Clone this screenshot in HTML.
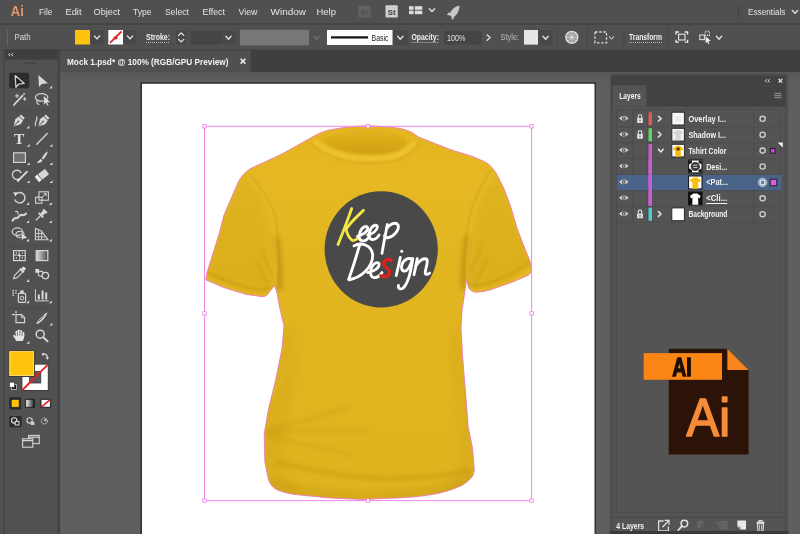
<!DOCTYPE html>
<html><head><meta charset="utf-8"><title>Illustrator</title>
<style>
html,body{margin:0;padding:0;width:800px;height:534px;overflow:hidden;background:#5f5f5f}
svg{display:block}
text{font-family:"Liberation Sans",sans-serif;}
text.srf{font-family:"Liberation Serif",serif;}
</style></head><body>
<svg width="800" height="534" viewBox="0 0 800 534" font-family="Liberation Sans, sans-serif">
<g opacity="0.999">
<rect x="0" y="0" width="800" height="534" fill="#5f5f5f" />
<rect x="60" y="72" width="740" height="7" fill="#5a5a5a" />
<rect x="141.2" y="83" width="454.1" height="460" fill="#ffffff" stroke="#333333" stroke-width="1.6"/>
<defs>
<linearGradient id="shg" x1="0" y1="0" x2="0" y2="1">
 <stop offset="0" stop-color="#e3b620"/><stop offset="0.15" stop-color="#e6b924"/><stop offset="0.32" stop-color="#e2b621"/><stop offset="0.55" stop-color="#e1b51f"/><stop offset="1" stop-color="#dfb31e"/>
</linearGradient>
<filter id="bl2" filterUnits="userSpaceOnUse" x="0" y="0" width="800" height="534"><feGaussianBlur stdDeviation="2"/></filter>
<filter id="bl1" filterUnits="userSpaceOnUse" x="0" y="0" width="800" height="534"><feGaussianBlur stdDeviation="1"/></filter>
<filter id="bl4" filterUnits="userSpaceOnUse" x="0" y="0" width="800" height="534"><feGaussianBlur stdDeviation="4"/></filter>
<clipPath id="shclip"><path id="shp" d="M317.5 134.2 C324 131 329 130 335 129 C346 127 356 126 366.5 125.9 C378 126 388 126.8 398 128.1 C403 129 408 130.5 412 132.5 L418.5 137 L450 149.4 C462 153.5 470 155 477 158.4 C482 160.5 485 161.5 488.3 164 C492 167 495 171 497.3 175.3 L504 188.8 L510.8 206.8 L517 228 L523.8 246 L529.4 259.5 C530.5 263 531.3 266 531.6 269.6 C531 272.5 530 274 528.3 275.3 L512.5 282 L490 289.9 C484 291.5 479 292.3 474.3 292.1 C471 291 469.5 289.5 468.6 287.6 L466.4 279.8 L465.3 288.8 L461.9 311.3 L461 328 L462.5 355.6 L465.4 391 L468.2 426.7 L472.5 448 L474.3 469.4 C474 474 473 476 470.7 478.3 C468 481.5 465 483.5 461.8 485.4 C452 490 443 492.5 433.4 494.3 C420 496.5 410 497.3 397.8 497.9 L380 498.6 L364.5 499.6 L329 497.9 L293.4 494.3 C286 493 280 491.5 275.6 489 C272 486.5 270 483.5 268.5 480 L264.9 462.3 L264.2 433.8 L268.5 409 L275.6 380.5 L282 348.5 L284 326 L280 309 L276.6 291 L274.4 285.4 L267.6 294.4 C266 296 264 296.8 262 296.6 L246.3 294.4 L223.8 287.6 L205.8 279.8 L206.9 273 L212.5 255 L219.5 232.5 L224 215 L228.5 204.5 L237.3 184.3 C239 180 241 177 244 174 C247 170.5 251 168 255.3 166.3 L280 155 L300 143.9 Z"/></clipPath>
</defs>
<use href="#shp" fill="url(#shg)"/>
<g clip-path="url(#shclip)">
<path d="M205 280 L224 215 L244 174 L262 200 L268 250 L274 286 L262 297 Z" fill="#b8900c" opacity="0.16" filter="url(#bl4)"/>
<path d="M532 270 L517 228 L497 175 L480 200 L472 250 L466 281 L474 293 Z" fill="#b8900c" opacity="0.16" filter="url(#bl4)"/>
<path d="M262 440 C270 400 280 370 284 326 L300 330 C296 380 285 420 282 470 L300 492 L270 492 Z" fill="#a88408" opacity="0.11" filter="url(#bl4)"/>
<path d="M476 440 C470 400 464 370 461 326 L450 330 C452 380 458 420 460 470 L440 494 L474 490 Z" fill="#a88408" opacity="0.10" filter="url(#bl4)"/>
<path d="M270 478 C300 486 340 490 370 491 C410 490 445 486 472 474 L474 500 L264 500 Z" fill="#a88408" opacity="0.16" filter="url(#bl2)"/>
<path d="M266 431 C295 424 325 414 351 407" stroke="#a88408" stroke-width="2.5" fill="none" opacity="0.28" filter="url(#bl2)"/>
<path d="M266 433 C300 430 335 430 368 432" stroke="#a88408" stroke-width="2.5" fill="none" opacity="0.25" filter="url(#bl2)"/>
<path d="M266 436 C295 442 325 449 351 455" stroke="#a88408" stroke-width="2.5" fill="none" opacity="0.25" filter="url(#bl2)"/>
<path d="M276 462 C310 470 350 478 385 478.5 C420 478 450 476 470 470" stroke="#9c7a06" stroke-width="3" fill="none" opacity="0.32" filter="url(#bl2)"/>
<path d="M268 400 C285 380 295 350 300 320" stroke="#f0c83c" stroke-width="3" fill="none" opacity="0.25" filter="url(#bl2)"/>
<path d="M276 236 C279 252 281.5 270 280 290" stroke="#9c7a06" stroke-width="6" fill="none" opacity="0.38" filter="url(#bl2)"/>
<path d="M467 236 C464.5 252 462 270 463.5 290" stroke="#9c7a06" stroke-width="6" fill="none" opacity="0.38" filter="url(#bl2)"/>
<path d="M262 250 L272 275 M256 262 L268 284" stroke="#a88408" stroke-width="2" fill="none" opacity="0.22" filter="url(#bl1)"/>
<path d="M481 246 L471 272 M488 258 L476 282" stroke="#a88408" stroke-width="2" fill="none" opacity="0.22" filter="url(#bl1)"/>
<path d="M246.8 175.6 C258 186 268 200 272 215 C276 235 277 262 275 286" stroke="#f0c83c" stroke-width="1.5" fill="none" opacity="0.55" filter="url(#bl1)"/>
<path d="M249 175 C260 186 270 200 274.5 215 C278.5 235 279.5 262 278 288" stroke="#b08c0c" stroke-width="1.6" fill="none" opacity="0.35" filter="url(#bl1)"/>
<path d="M494 171 C484 184 476 200 472 218 C468 240 466 262 467 281" stroke="#f0c83c" stroke-width="1.5" fill="none" opacity="0.5" filter="url(#bl1)"/>
<path d="M491.5 170 C481.5 184 473.5 200 469.5 218 C465.5 240 463.5 262 464 282" stroke="#b08c0c" stroke-width="1.6" fill="none" opacity="0.35" filter="url(#bl1)"/>
<path d="M207.5 272 L225 280.5 L247 287.5 L263 290 L270 287" stroke="#b08c0c" stroke-width="1.4" fill="none" opacity="0.55" filter="url(#bl1)"/>
<path d="M529 262 L511 275 L489 283 L474 286 L469 283" stroke="#b08c0c" stroke-width="1.4" fill="none" opacity="0.55" filter="url(#bl1)"/>
<path d="M205.8 279.8 L223.8 287.6 L246.3 294.4 L262 296.6 L268 294" stroke="#f0c43a" stroke-width="2.5" fill="none" opacity="0.5" filter="url(#bl1)"/>
<path d="M531.6 269.6 L512.5 282 L490 289.9 L474.3 292.1" stroke="#f0c43a" stroke-width="2.5" fill="none" opacity="0.5" filter="url(#bl1)"/>
<defs><linearGradient id="colg" x1="0" y1="0" x2="0" y2="1"><stop offset="0" stop-color="#dfb21c"/><stop offset="1" stop-color="#d0a012"/></linearGradient></defs>
<path d="M314 141.5 C322 149 333 154 344.6 156.6 C353 158.4 361 159.2 370 159.2 C379 159.2 388 158.4 396.2 156 C404 153.4 410 149 415.5 142.5" stroke="#f0c434" stroke-width="6.5" fill="none" opacity="0.75" filter="url(#bl1)"/>
<path d="M322.8 141.5 C326 137 330 135 335 134.2 C346 132.5 356 131.7 366.5 131.6 C378 131.7 388 132.6 398 134.2 C402 135.5 405 138 406.8 143 C403 148 399 150 394.5 151.8 C386 153.8 378 154.4 370 154.4 C361 154.2 353 153.6 345.5 151.8 C336 149 329 146 322.8 141.5 Z" fill="url(#colg)" filter="url(#bl1)"/>
<path d="M310.5 143 C320 151 332 157 343.8 160.2 C352 162 361 162.8 370 162.8 C380 162.7 389 161.8 398 159.4 C406 156.4 413 151.4 419 144" stroke="#c29006" stroke-width="1.2" fill="none" opacity="0.5" filter="url(#bl1)"/>
</g>
<use href="#shp" fill="none" stroke="#ee7ab4" stroke-width="1" opacity="0.9"/>
<ellipse cx="381.2" cy="249.3" rx="56.6" ry="58.1" fill="#494949"/>
<g transform="translate(330,200) scale(0.178)" fill="none" stroke-linecap="round" stroke-linejoin="round" stroke-width="16">
<g stroke="#f3e645">
<path d="M122 48 C100 110 70 190 45 250"/>
<path d="M188 58 C150 95 110 130 90 165 C100 200 115 225 130 228 C140 228 148 222 155 215"/>
</g><g stroke="#ffffff">
<path d="M155 203 C180 198 210 182 212 160 C212 144 192 146 180 160 C160 183 158 222 178 229 C195 233 212 220 222 203"/>
<path d="M212 196 C236 190 264 174 266 152 C266 137 247 139 235 153 C216 176 213 214 232 221 C249 225 266 213 276 196"/>
<path d="M322 138 C312 190 300 250 292 300"/>
<path d="M318 160 C335 135 370 120 382 140 C392 165 360 205 325 212 C315 213 308 208 306 200"/>
<path d="M168 248 C150 310 125 390 105 445"/>
<path d="M135 258 C170 235 235 250 240 310 C240 380 170 440 108 448"/>
<path d="M212 408 C240 402 274 386 276 362 C276 347 256 349 244 363 C224 387 221 428 243 435 C261 439 280 426 292 408"/>
<path d="M395 322 C388 360 378 395 372 425"/>
<circle cx="403" cy="288" r="8.5" fill="#ffffff" stroke="none"/>
<path d="M462 335 C440 320 410 335 402 370 C398 400 420 410 440 385 C452 368 460 345 465 330"/>
<path d="M465 330 C455 400 440 470 410 495 C395 505 380 495 385 480"/>
<path d="M490 330 C485 360 478 395 472 420"/>
<path d="M482 370 C500 340 530 320 545 335 C552 350 535 390 535 410 C537 422 550 420 560 410"/>
</g><g stroke="#e0201c" stroke-width="18">
<path d="M345 340 C330 328 305 335 300 355 C298 375 335 380 335 405 C335 430 300 440 285 425"/>
</g></g>
<rect x="204.5" y="126.3" width="327.1" height="374.3" fill="none" stroke="#ef86ef" stroke-width="1"/>
<rect x="202.8" y="124.6" width="3.4" height="3.4" fill="#fff" stroke="#ef86ef" stroke-width="0.9"/>
<rect x="366.3" y="124.6" width="3.4" height="3.4" fill="#fff" stroke="#ef86ef" stroke-width="0.9"/>
<rect x="529.9" y="124.6" width="3.4" height="3.4" fill="#fff" stroke="#ef86ef" stroke-width="0.9"/>
<rect x="202.8" y="311.7" width="3.4" height="3.4" fill="#fff" stroke="#ef86ef" stroke-width="0.9"/>
<rect x="529.9" y="311.7" width="3.4" height="3.4" fill="#fff" stroke="#ef86ef" stroke-width="0.9"/>
<rect x="202.8" y="498.90000000000003" width="3.4" height="3.4" fill="#fff" stroke="#ef86ef" stroke-width="0.9"/>
<rect x="366.3" y="498.90000000000003" width="3.4" height="3.4" fill="#fff" stroke="#ef86ef" stroke-width="0.9"/>
<rect x="529.9" y="498.90000000000003" width="3.4" height="3.4" fill="#fff" stroke="#ef86ef" stroke-width="0.9"/>
<rect x="0" y="0" width="800" height="24" fill="#505050" />
<rect x="0" y="24" width="800" height="26" fill="#505050" />
<rect x="0" y="23.5" width="800" height="1" fill="#3b3b3b" />
<rect x="0" y="49.5" width="800" height="22.5" fill="#3f3f3f" />
<text x="10.8" y="15.9" font-size="14.2" fill="#e39a6c" font-weight="bold" textLength="13" lengthAdjust="spacingAndGlyphs" >Ai</text>
<text x="39" y="15.1" font-size="9.5" fill="#e4e4e4" font-weight="normal" textLength="13.5" lengthAdjust="spacingAndGlyphs" >File</text>
<text x="65.5" y="15.1" font-size="9.5" fill="#e4e4e4" font-weight="normal" textLength="16" lengthAdjust="spacingAndGlyphs" >Edit</text>
<text x="93.6" y="15.1" font-size="9.5" fill="#e4e4e4" font-weight="normal" textLength="26.4" lengthAdjust="spacingAndGlyphs" >Object</text>
<text x="133" y="15.1" font-size="9.5" fill="#e4e4e4" font-weight="normal" textLength="18.6" lengthAdjust="spacingAndGlyphs" >Type</text>
<text x="165" y="15.1" font-size="9.5" fill="#e4e4e4" font-weight="normal" textLength="24" lengthAdjust="spacingAndGlyphs" >Select</text>
<text x="202.5" y="15.1" font-size="9.5" fill="#e4e4e4" font-weight="normal" textLength="22.5" lengthAdjust="spacingAndGlyphs" >Effect</text>
<text x="238.5" y="15.1" font-size="9.5" fill="#e4e4e4" font-weight="normal" textLength="19" lengthAdjust="spacingAndGlyphs" >View</text>
<text x="270.5" y="15.1" font-size="9.5" fill="#e4e4e4" font-weight="normal" textLength="35.5" lengthAdjust="spacingAndGlyphs" >Window</text>
<text x="316.5" y="15.1" font-size="9.5" fill="#e4e4e4" font-weight="normal" textLength="19.5" lengthAdjust="spacingAndGlyphs" >Help</text>
<rect x="358.4" y="6" width="12.2" height="11.5" fill="#626262" rx="1"/>
<text x="360.5" y="14.8" font-size="8" fill="#505050" font-weight="bold" textLength="8" lengthAdjust="spacingAndGlyphs" >Br</text>
<rect x="385.5" y="5.3" width="12.3" height="12.2" fill="#cfcfcf" rx="1"/>
<text x="387.8" y="14.6" font-size="8" fill="#3c3c3c" font-weight="bold" textLength="7.8" lengthAdjust="spacingAndGlyphs" >St</text>
<rect x="409" y="6.2" width="4.6" height="3.6" fill="#dcdcdc" />
<rect x="414.8" y="6.2" width="7.5" height="3.6" fill="#dcdcdc" />
<rect x="409" y="10.7" width="4.6" height="3.5" fill="#dcdcdc" />
<rect x="414.8" y="10.7" width="7.5" height="3.5" fill="#dcdcdc" />
<path d="M429.4 8.7 L432 11.600000000000001 L434.6 8.7" fill="none" stroke="#e0e0e0" stroke-width="1.4" stroke-linecap="round" stroke-linejoin="round"/>
<path d="M459.5 5.5 C455 6.5 451.5 9.5 450 13 L448.3 12.6 L447 15 L450.2 15.4 L451.8 17.2 L451.6 19.8 L454 18.6 L453.8 17 C457 15 459.4 11 459.5 5.5 Z" fill="#c8c8c8"/>
<rect x="738" y="5" width="1" height="14" fill="#404040" />
<text x="748" y="15.1" font-size="9.5" fill="#e4e4e4" font-weight="normal" textLength="37.5" lengthAdjust="spacingAndGlyphs" >Essentials</text>
<path d="M792.4 10.5 L795 13.400000000000002 L797.6 10.5" fill="none" stroke="#e0e0e0" stroke-width="1.4" stroke-linecap="round" stroke-linejoin="round"/>
<rect x="7" y="30.5" width="1" height="1" fill="#7a7a7a" />
<rect x="7" y="32.5" width="1" height="1" fill="#7a7a7a" />
<rect x="7" y="34.5" width="1" height="1" fill="#7a7a7a" />
<rect x="7" y="36.5" width="1" height="1" fill="#7a7a7a" />
<rect x="7" y="38.5" width="1" height="1" fill="#7a7a7a" />
<rect x="7" y="40.5" width="1" height="1" fill="#7a7a7a" />
<rect x="7" y="42.5" width="1" height="1" fill="#7a7a7a" />
<rect x="7" y="44.5" width="1" height="1" fill="#7a7a7a" />
<text x="14.5" y="40.3" font-size="9" fill="#dcdcdc" font-weight="normal" textLength="16" lengthAdjust="spacingAndGlyphs" >Path</text>
<rect x="75" y="30" width="15" height="14.5" fill="#ffc20e" />
<rect x="90.5" y="30" width="13" height="14.5" fill="#484848" />
<path d="M94.4 36.0 L97 38.89999999999999 L99.6 36.0" fill="none" stroke="#e0e0e0" stroke-width="1.4" stroke-linecap="round" stroke-linejoin="round"/>
<rect x="108.3" y="30" width="14.7" height="14.5" fill="#ffffff" />
<path d="M110 42.8 L121.5 31.5" stroke="#e0262a" stroke-width="1.8"/>
<path d="M113.2 37.2 L116.2 35.8 L118 38.2 L115.6 39.8 Z" fill="#e0262a"/>
<rect x="123.5" y="30" width="13" height="14.5" fill="#484848" />
<path d="M127.4 36.0 L130 38.89999999999999 L132.6 36.0" fill="none" stroke="#e0e0e0" stroke-width="1.4" stroke-linecap="round" stroke-linejoin="round"/>
<text x="146" y="40.3" font-size="9" fill="#f0f0f0" font-weight="bold" textLength="24" lengthAdjust="spacingAndGlyphs" >Stroke:</text>
<path d="M146 42.5 H170" stroke="#d0d0d0" stroke-width="0.8" stroke-dasharray="1 1"/>
<rect x="176" y="30" width="10.5" height="14.5" fill="#484848" />
<path d="M178.6 35.4 L181.2 32.9 L183.8 35.4" fill="none" stroke="#e8e8e8" stroke-width="1.3" stroke-linecap="round" stroke-linejoin="round"/>
<path d="M178.6 39.4 L181.2 41.9 L183.8 39.4" fill="none" stroke="#e8e8e8" stroke-width="1.3" stroke-linecap="round" stroke-linejoin="round"/>
<rect x="190.5" y="31" width="31.5" height="13.5" fill="#454545" />
<rect x="222.5" y="31" width="14" height="13.5" fill="#484848" />
<path d="M225.9 36.300000000000004 L228.5 39.199999999999996 L231.1 36.300000000000004" fill="none" stroke="#e0e0e0" stroke-width="1.4" stroke-linecap="round" stroke-linejoin="round"/>
<rect x="240" y="29.8" width="69" height="15.6" fill="#777777" />
<path d="M314.0 36.300000000000004 L316.6 39.199999999999996 L319.20000000000005 36.300000000000004" fill="none" stroke="#6e6e6e" stroke-width="1.4" stroke-linecap="round" stroke-linejoin="round"/>
<rect x="327" y="30" width="65.5" height="15" fill="#fdfdfd" />
<rect x="331" y="36.3" width="37" height="2.2" fill="#111111" />
<text x="371.6" y="40.6" font-size="8.5" fill="#222222" font-weight="normal" textLength="17" lengthAdjust="spacingAndGlyphs" >Basic</text>
<rect x="393" y="30" width="15" height="15" fill="#484848" />
<path d="M397.7 36.300000000000004 L400.3 39.199999999999996 L402.90000000000003 36.300000000000004" fill="none" stroke="#e0e0e0" stroke-width="1.4" stroke-linecap="round" stroke-linejoin="round"/>
<text x="411.4" y="40.3" font-size="9" fill="#f0f0f0" font-weight="bold" textLength="27.6" lengthAdjust="spacingAndGlyphs" >Opacity:</text>
<path d="M411.4 42.5 H439" stroke="#d0d0d0" stroke-width="0.8" stroke-dasharray="1 1"/>
<rect x="444.4" y="31" width="37.4" height="13.5" fill="#454545" />
<text x="447" y="40.6" font-size="8.5" fill="#e4e4e4" font-weight="normal" textLength="18.5" lengthAdjust="spacingAndGlyphs" >100%</text>
<path d="M487.2 35.0 L490.1 37.6 L487.2 40.2" fill="none" stroke="#e0e0e0" stroke-width="1.4" stroke-linecap="round" stroke-linejoin="round"/>
<text x="500.6" y="40.3" font-size="9" fill="#bdbdbd" font-weight="normal" textLength="18.5" lengthAdjust="spacingAndGlyphs" >Style:</text>
<rect x="524" y="30" width="14" height="14.6" fill="#e6e6e6" />
<rect x="538.5" y="30" width="14" height="14.6" fill="#484848" />
<path d="M543.0 36.300000000000004 L545.6 39.199999999999996 L548.2 36.300000000000004" fill="none" stroke="#e0e0e0" stroke-width="1.4" stroke-linecap="round" stroke-linejoin="round"/>
<rect x="556.5" y="27" width="1" height="20" fill="#464646" />
<circle cx="571.8" cy="37.3" r="6" fill="#9a9a9a" stroke="#e0e0e0" stroke-width="1.3"/>
<circle cx="571.8" cy="37.3" r="1.3" fill="#e8e8e8"/>
<path d="M571.8 31.3 V43.3 M565.8 37.3 H577.8 M567.6 33.1 L576 41.5 M576 33.1 L567.6 41.5" stroke="#e0e0e0" stroke-width="0.7"/>
<rect x="586.5" y="27" width="1" height="20" fill="#464646" />
<rect x="595" y="32" width="11.5" height="10.8" fill="none" stroke="#dcdcdc" stroke-width="1.3" stroke-dasharray="2.4 1.8"/>
<path d="M609.3 36.5 L611.5 39.0 L613.7 36.5" fill="none" stroke="#c8c8c8" stroke-width="1.1" stroke-linecap="round" stroke-linejoin="round"/>
<rect x="623.5" y="27" width="1" height="20" fill="#464646" />
<text x="629" y="40.3" font-size="9" fill="#f0f0f0" font-weight="bold" textLength="33" lengthAdjust="spacingAndGlyphs" >Transform</text>
<path d="M629 42.5 H662" stroke="#d0d0d0" stroke-width="0.8" stroke-dasharray="1 1"/>
<rect x="667" y="27" width="1" height="20" fill="#464646" />
<rect x="678.6" y="34.2" width="6.4" height="5.8" fill="none" stroke="#dcdcdc" stroke-width="1.2"/>
<path d="M676 34.5 V32 H678.8 M684.8 32 H687.6 V34.5 M687.6 39.7 V42.2 H684.8 M678.8 42.2 H676 V39.7" fill="none" stroke="#f0f0f0" stroke-width="1.3"/>
<rect x="699.8" y="35" width="4.6" height="4.6" fill="none" stroke="#dcdcdc" stroke-width="1.1"/>
<rect x="705.2" y="31.2" width="4.2" height="4.2" fill="none" stroke="#dcdcdc" stroke-width="1.1" stroke-dasharray="1.4 1"/>
<path d="M705.6 36.2 L710.8 41 L708.3 41.2 L709.4 43.6 L708.2 44 L707.2 41.8 L705.6 43.2 Z" fill="#f0f0f0"/>
<path d="M716.4 36.300000000000004 L719 39.199999999999996 L721.6 36.300000000000004" fill="none" stroke="#e0e0e0" stroke-width="1.4" stroke-linecap="round" stroke-linejoin="round"/>
<rect x="60" y="50.5" width="190.5" height="21.5" fill="#505050" />
<text x="67" y="64.7" font-size="9.5" fill="#f2f2f2" font-weight="bold" textLength="161.5" lengthAdjust="spacingAndGlyphs" >Mock 1.psd* @ 100% (RGB/GPU Preview)</text>
<path d="M240.6 58.8 L245.4 63.6 M245.4 58.8 L240.6 63.6" stroke="#ececec" stroke-width="1.5"/>
<rect x="0" y="50" width="60" height="484" fill="#505050" />
<rect x="3" y="50" width="2" height="484" fill="#484848" />
<rect x="5" y="50" width="52.5" height="484" fill="#515151" />
<rect x="57.5" y="50" width="2.6" height="484" fill="#444444" />
<rect x="5" y="49.8" width="52.5" height="9.8" fill="#3e3e3e" />
<path d="M10.2 53.2 L8.7 54.7 L10.2 56.2 M13 53.2 L11.5 54.7 L13 56.2" fill="none" stroke="#e6e6e6" stroke-width="1"/>
<path d="M23.5 63 H37.5" stroke="#3c3c3c" stroke-width="1.4" stroke-dasharray="1 1"/>
<rect x="8" y="109.6" width="46" height="1" fill="#4b4b4b" />
<rect x="8" y="186" width="46" height="1" fill="#4b4b4b" />
<rect x="8" y="245.4" width="46" height="1" fill="#4b4b4b" />
<rect x="8" y="307.2" width="46" height="1" fill="#4b4b4b" />
<rect x="9.2" y="72.7" width="20" height="15.6" fill="#2c2c2c" rx="2"/>
<path d="M15.2 75.6 L15.9 87.3 L18.6 84.2 L24.3 83.4 Z" fill="#1e1e1e" stroke="#cfcfcf" stroke-width="1.3" stroke-linejoin="round"/>
<path d="M38.4 75 L39 87 L41.8 83.9 L47.8 83.2 Z" fill="#d8d8d8"/>
<path d="M52.099999999999994 85.7 L52.099999999999994 88.5 L49.3 88.5 Z" fill="#dcdcdc"/>
<path d="M13.8 105 L22.6 95.6" stroke="#dcdcdc" stroke-width="1.7" stroke-linecap="round"/>
<path d="M17 93.8 V98 M14.9 95.9 H19.1 M24.6 97.3 V100.7 M22.9 99 H26.3 M23.4 93.2 L24.8 94.6 M24.8 93.2 L23.4 94.6" stroke="#dcdcdc" stroke-width="1"/>
<ellipse cx="41.6" cy="97.4" rx="6.2" ry="3.8" fill="none" stroke="#cfcfcf" stroke-width="1.3"/>
<path d="M37.6 100 C36 102 37 104.5 39.4 104.4" fill="none" stroke="#cfcfcf" stroke-width="1.2"/>
<path d="M43.6 95.4 L43.8 105.2 L46 103 L47.4 106 L48.8 105.4 L47.5 102.5 L50.4 102.2 Z" fill="#e0e0e0" stroke="#515151" stroke-width="0.5"/>
<g transform="translate(18.3,121.4) rotate(42)"><path d="M-2.6 -6.8 H2.6 V-4.6 H-2.6 Z M-3 -3.8 H3 L3.6 0.5 L0 7 L-3.6 0.5 Z" fill="#d8d8d8"/><path d="M0 6 V0.6" stroke="#515151" stroke-width="0.9"/><circle cx="0" cy="0" r="0.9" fill="#515151"/></g>
<path d="M29.3 125.7 L29.3 128.5 L26.5 128.5 Z" fill="#dcdcdc"/>
<path d="M35.6 126 C33.5 122 38.5 121 36.6 116.4" fill="none" stroke="#cfcfcf" stroke-width="1.3"/>
<g transform="translate(43,121.4) rotate(42)"><path d="M-2.6 -6.8 H2.6 V-4.6 H-2.6 Z M-3 -3.8 H3 L3.6 0.5 L0 7 L-3.6 0.5 Z" fill="#d8d8d8"/><path d="M0 6 V0.6" stroke="#515151" stroke-width="0.9"/><circle cx="0" cy="0" r="0.9" fill="#515151"/></g>
<text x="19.2" y="144.4" class="srf" font-weight="bold" font-size="15.5" fill="#dedede" text-anchor="middle">T</text>
<path d="M29.7 143.9 L29.7 146.70000000000002 L26.9 146.70000000000002 Z" fill="#dcdcdc"/>
<path d="M36.8 144.2 L47.2 133.6" stroke="#d6d6d6" stroke-width="1.4" stroke-linecap="round"/>
<path d="M52.5 143.9 L52.5 146.70000000000002 L49.7 146.70000000000002 Z" fill="#dcdcdc"/>
<rect x="13.6" y="152.8" width="11.8" height="9.6" fill="#6f6f6f" stroke="#d2d2d2" stroke-width="1.2"/>
<path d="M29.7 162.3 L29.7 165.10000000000002 L26.9 165.10000000000002 Z" fill="#dcdcdc"/>
<path d="M47.6 151.2 C46 152 43.6 155 41.6 158.2 L43.2 159.6 C45.6 157 47.6 153.6 47.6 151.2 Z" fill="#dadada"/>
<path d="M40.9 158.9 L42.5 160.4 C41.6 162.4 39 163.2 36.6 162.8 C38.4 161.8 38.8 159.8 40.9 158.9 Z" fill="#dadada"/>
<path d="M52.5 162.3 L52.5 165.10000000000002 L49.7 165.10000000000002 Z" fill="#dcdcdc"/>
<path d="M19.6 178.6 A4.6 4.6 0 1 1 21.2 173" fill="none" stroke="#cfcfcf" stroke-width="1.4"/>
<path d="M17.8 181 L27 171.6" stroke="#dcdcdc" stroke-width="1.8" stroke-linecap="round"/>
<path d="M29.7 180.2 L29.7 183.0 L26.9 183.0 Z" fill="#dcdcdc"/>
<g transform="translate(42,175.4) rotate(-38)"><rect x="-6.4" y="-3.4" width="12.8" height="6.8" rx="0.8" fill="#d6d6d6"/><rect x="-6.4" y="-3.4" width="3.6" height="6.8" fill="#ededed"/><path d="M-2.8 -3.4 V3.4" stroke="#515151" stroke-width="0.8"/></g>
<path d="M52.5 180.2 L52.5 183.0 L49.7 183.0 Z" fill="#dcdcdc"/>
<path d="M15.6 194.6 A5.2 5.2 0 1 1 14.8 199.4" fill="none" stroke="#cfcfcf" stroke-width="1.5"/>
<path d="M13.2 192.2 L17.6 192.6 L15.4 196.6 Z" fill="#dcdcdc"/>
<path d="M29.1 202.2 L29.1 205.0 L26.3 205.0 Z" fill="#dcdcdc"/>
<rect x="35.6" y="197.2" width="6.4" height="6" fill="none" stroke="#d2d2d2" stroke-width="1.1"/>
<rect x="39" y="191.8" width="9.4" height="8.4" fill="none" stroke="#d2d2d2" stroke-width="1.1"/>
<path d="M42 197.4 L46.2 193.6 M43.6 193.6 H46.2 V196" fill="none" stroke="#d2d2d2" stroke-width="1"/>
<path d="M51.8 202.2 L51.8 205.0 L49.0 205.0 Z" fill="#dcdcdc"/>
<path d="M12.6 220.4 C15 215.8 16.4 220.2 19 216.4 C21 213 23.4 217 26 213.6" fill="none" stroke="#d2d2d2" stroke-width="2.2" stroke-linecap="round"/>
<path d="M15.2 211.6 C17.4 210.8 18.6 212.6 17.8 214.4 M13.4 219.6 L12.4 221.6" stroke="#d2d2d2" stroke-width="1.2" fill="none"/>
<path d="M29.1 220.2 L29.1 223.0 L26.3 223.0 Z" fill="#dcdcdc"/>
<g transform="translate(41,215.2) rotate(45)"><rect x="-2.6" y="-6.6" width="5.2" height="2" fill="#dcdcdc"/><rect x="-1.7" y="-4.8" width="3.4" height="4" fill="#dcdcdc"/><path d="M-3.6 -0.8 H3.6 L2.6 1 H-2.6 Z" fill="#dcdcdc"/><path d="M0 1 V7.2" stroke="#dcdcdc" stroke-width="1.2"/></g>
<path d="M51.8 220.2 L51.8 223.0 L49.0 223.0 Z" fill="#dcdcdc"/>
<ellipse cx="17.4" cy="231.6" rx="5.2" ry="3.8" fill="none" stroke="#cfcfcf" stroke-width="1.3"/>
<ellipse cx="20" cy="234.4" rx="4" ry="3" fill="none" stroke="#cfcfcf" stroke-width="1.1"/>
<path d="M21.2 232 L21.6 240.6 L23.6 238.6 L27.6 238.2 Z" fill="#e2e2e2" stroke="#515151" stroke-width="0.5"/>
<path d="M29.1 238.8 L29.1 241.60000000000002 L26.3 241.60000000000002 Z" fill="#dcdcdc"/>
<path d="M35.4 228.4 V239.8 L48 239.8 L41.4 231 Z" fill="none" stroke="#d0d0d0" stroke-width="1.1"/>
<path d="M35.4 233.4 L43.4 233.6 M35.4 236.8 L45.8 237 M38.6 229.8 V239.8 M41.6 231.4 V239.8" stroke="#d0d0d0" stroke-width="0.9"/>
<path d="M51.8 238.8 L51.8 241.60000000000002 L49.0 241.60000000000002 Z" fill="#dcdcdc"/>
<rect x="13.6" y="250.6" width="11.6" height="10" fill="#4a4a4a" stroke="#d4d4d4" stroke-width="1.2"/>
<path d="M13.6 255.4 C16.4 253.8 21 257 25.2 255.4 M19.4 250.6 C18 253.4 21 257.4 19.4 260.6" stroke="#d4d4d4" stroke-width="1" fill="none"/>
<circle cx="19.4" cy="255.4" r="1.1" fill="#e6e6e6"/><circle cx="16.4" cy="253" r="0.7" fill="#e6e6e6"/><circle cx="22.4" cy="258" r="0.7" fill="#e6e6e6"/><circle cx="22.4" cy="253" r="0.7" fill="#e6e6e6"/><circle cx="16.4" cy="258" r="0.7" fill="#e6e6e6"/>
<defs><linearGradient id="tg" x1="0" x2="1"><stop offset="0" stop-color="#e0e0e0"/><stop offset="1" stop-color="#4c4c4c"/></linearGradient></defs>
<rect x="36.2" y="250.6" width="11.6" height="10" fill="url(#tg)" stroke="#d4d4d4" stroke-width="1.2"/>
<g transform="translate(19,273.4) rotate(45)"><rect x="-1.9" y="-8.4" width="3.8" height="3.4" rx="1.2" fill="#dcdcdc"/><rect x="-2.8" y="-5.2" width="5.6" height="1.5" fill="#dcdcdc"/><path d="M-1.7 -3.6 H1.7 V4.6 L0 7.6 L-1.7 4.6 Z" fill="none" stroke="#dcdcdc" stroke-width="1.1"/></g>
<path d="M29.1 279.1 L29.1 281.90000000000003 L26.3 281.90000000000003 Z" fill="#dcdcdc"/>
<rect x="35.4" y="269" width="3.6" height="3.8" fill="#dcdcdc"/>
<rect x="38.4" y="271.4" width="4.6" height="4.8" rx="1.6" fill="#515151" stroke="#d0d0d0" stroke-width="1.1"/>
<circle cx="45.4" cy="275.6" r="3.2" fill="#515151" stroke="#dcdcdc" stroke-width="1.3"/>
<rect x="18.4" y="293.4" width="7.2" height="9" rx="1" fill="none" stroke="#d4d4d4" stroke-width="1.2"/>
<rect x="20.2" y="290.4" width="3.6" height="3" fill="#d4d4d4"/><circle cx="22" cy="298" r="1.8" fill="none" stroke="#d4d4d4" stroke-width="1"/>
<path d="M12.4 290.6 h1.6 M15.2 290.6 h1.6 M12.4 293 h1.6 M15.2 293 h1.4 M12.4 295.4 h1.6" stroke="#d4d4d4" stroke-width="1.3"/>
<path d="M29.1 300.5 L29.1 303.3 L26.3 303.3 Z" fill="#dcdcdc"/>
<path d="M35.4 289.2 V300.9 H48.8" fill="none" stroke="#d4d4d4" stroke-width="1"/>
<path d="M38.8 299.4 V294.6 M42.6 299.4 V290.4 M46.2 299.4 V292.6" stroke="#d8d8d8" stroke-width="2"/>
<path d="M51.8 300.5 L51.8 303.3 L49.0 303.3 Z" fill="#dcdcdc"/>
<path d="M16 314.6 H21.6 L24.6 317.6 V322.6 H16 Z" fill="none" stroke="#d4d4d4" stroke-width="1.2"/>
<path d="M21.4 314.8 V317.8 H24.4" fill="none" stroke="#d4d4d4" stroke-width="0.9"/>
<path d="M12 314.6 H15 M16 310.8 V313.6" stroke="#d4d4d4" stroke-width="1.2"/>
<path d="M47.4 312.2 C44 314 39.4 318.8 36 323.4 L38 323.8 C42 321.4 46.6 316.4 47.4 312.2 Z" fill="#d8d8d8"/>
<path d="M44.2 315.2 L38.8 321.4" stroke="#515151" stroke-width="0.9"/>
<path d="M52.3 322.8 L52.3 325.6 L49.5 325.6 Z" fill="#dcdcdc"/>
<path d="M16.2 341 C15 338.6 14 337.2 12.8 335.8 C13.4 334.6 14.8 335 15.8 336.4 L15.4 331.4 C16.2 330.4 17.2 330.8 17.4 331.8 L17.8 330 C18.6 329.2 19.6 329.6 19.8 330.6 L20.2 330.4 C21 329.8 22 330.2 22.2 331.2 L22.6 332.4 C23.4 331.8 24.4 332.2 24.4 333.4 C24.6 336 24 338.8 22.8 341 Z" fill="#e4e4e4"/>
<path d="M17.5 332 V336 M19.9 330.8 V335.6 M22.2 331.6 V336" stroke="#515151" stroke-width="0.7"/>
<path d="M29.400000000000002 340.9 L29.400000000000002 343.7 L26.6 343.7 Z" fill="#dcdcdc"/>
<circle cx="40.2" cy="334.2" r="4" fill="none" stroke="#d6d6d6" stroke-width="1.5"/>
<path d="M43.2 337.2 L47.6 341.4" stroke="#d6d6d6" stroke-width="2" stroke-linecap="round"/>
<rect x="21.9" y="364.1" width="26.4" height="26.4" fill="#ffffff" stroke="#3a3a3a" stroke-width="1"/>
<rect x="29.6" y="371.6" width="11.2" height="11.4" fill="#585858" stroke="#3a3a3a" stroke-width="0.8"/>
<path d="M22.4 390 L47.8 364.6" stroke="#e2222a" stroke-width="1.9"/>
<rect x="8.8" y="350.7" width="25.8" height="25.8" fill="#ffc30d" stroke="#3a3a3a" stroke-width="1"/>
<rect x="9.8" y="351.7" width="23.8" height="23.8" fill="none" stroke="#ffe08a" stroke-width="0.8"/>
<path d="M42.6 354 C45.6 353.2 47.8 355.2 47.4 358.4" fill="none" stroke="#d8d8d8" stroke-width="1.2"/>
<path d="M41.4 354.4 L43.8 352.4 L43.8 356 Z M47.4 359.8 L45.6 357.4 L49 357.2 Z" fill="#e0e0e0"/>
<rect x="11.6" y="384.4" width="5" height="5" fill="#1c1c1c" stroke="#d8d8d8" stroke-width="0.7"/>
<rect x="9.4" y="382.2" width="5" height="5" fill="#ffffff" stroke="#333" stroke-width="0.6"/>
<rect x="9.3" y="397.2" width="11.8" height="12.2" fill="#2a2a2a" rx="1.5"/>
<rect x="11.2" y="399.3" width="8" height="8" fill="#ffc30d" stroke="#1e1e1e" stroke-width="0.8"/>
<defs><linearGradient id="tg2" x1="0" x2="1"><stop offset="0" stop-color="#ffffff"/><stop offset="1" stop-color="#1a1a1a"/></linearGradient></defs>
<rect x="25.6" y="399.3" width="8.8" height="8" fill="url(#tg2)" stroke="#1e1e1e" stroke-width="1"/>
<rect x="41" y="399.3" width="9.4" height="8" fill="#ffffff" stroke="#1e1e1e" stroke-width="1"/>
<path d="M41.6 406.8 L49.8 399.8" stroke="#e2222a" stroke-width="1.7"/>
<rect x="9.3" y="416" width="12.3" height="11.2" fill="#2a2a2a" rx="1.5"/>
<circle cx="14.2" cy="420.4" r="2.7" fill="none" stroke="#e0e0e0" stroke-width="1.1"/><rect x="15.2" y="421.4" width="3.8" height="3.6" fill="#2a2a2a" stroke="#e0e0e0" stroke-width="1"/>
<circle cx="29.6" cy="420.4" r="2.7" fill="none" stroke="#cfcfcf" stroke-width="1.1"/><rect x="30.8" y="421.6" width="3.6" height="3.4" fill="#cfcfcf"/>
<circle cx="44.4" cy="421" r="3" fill="none" stroke="#bdbdbd" stroke-width="1.1" stroke-dasharray="1.6 0.9"/><circle cx="45.2" cy="420.2" r="1.2" fill="#bdbdbd"/>
<rect x="28.6" y="435.4" width="10.6" height="8.2" fill="#515151" stroke="#d6d6d6" stroke-width="1.1"/><path d="M28.6 437.2 H39.2" stroke="#d6d6d6" stroke-width="1.2"/>
<rect x="22.6" y="438.8" width="10.2" height="8.4" fill="#515151" stroke="#d6d6d6" stroke-width="1.1"/><path d="M22.6 440.6 H32.8" stroke="#d6d6d6" stroke-width="1.2"/>
<rect x="609.5" y="73" width="179" height="461" fill="#4c4c4c" rx="3" opacity="0.55"/>
<rect x="611.5" y="75" width="174.5" height="457" fill="#545454" rx="2" stroke="#444444" stroke-width="1"/>
<path d="M612 77 Q612 75.5 613.5 75.5 H784 Q785.5 75.5 785.5 77 V85.5 H612 Z" fill="#424242"/>
<path d="M766.9 79.2 L765.4 80.8 L766.9 82.4 M769.7 79.2 L768.2 80.8 L769.7 82.4" fill="none" stroke="#e4e4e4" stroke-width="1"/>
<path d="M778.6 79 L782.2 82.6 M782.2 79 L778.6 82.6" stroke="#e8e8e8" stroke-width="1.3"/>
<rect x="612" y="85.5" width="173.5" height="21.2" fill="#424242" />
<rect x="612.5" y="85.5" width="34" height="21.2" fill="#545454" />
<text x="619.2" y="99.4" font-size="9.5" fill="#f4f4f4" font-weight="bold" textLength="21.5" lengthAdjust="spacingAndGlyphs" >Layers</text>
<path d="M774.4 93.4 H781.4 M774.4 95.5 H781.4 M774.4 97.6 H781.4" stroke="#858585" stroke-width="1.4"/>
<rect x="616.5" y="109.5" width="164" height="403" fill="none" stroke="#4b4b4b" stroke-width="1"/>
<rect x="632.5" y="110" width="0.8" height="113" fill="#494949" />
<rect x="647.4" y="110" width="0.8" height="113" fill="#494949" />
<rect x="753.5" y="110" width="0.8" height="113" fill="#494949" />
<rect x="616.8" y="174.7" width="165" height="15.6" fill="#4a6388" />
<rect x="617" y="126.60000000000001" width="163.5" height="0.7" fill="#484848" opacity="0.8"/>
<path d="M619.0 118.30000000000001 Q623.8 113.70000000000002 628.5999999999999 118.30000000000001 Q623.8 122.9 619.0 118.30000000000001 Z" fill="#d8d8d8"/>
<circle cx="623.8" cy="118.30000000000001" r="1.9" fill="#4a4a4a"/><circle cx="623.8" cy="118.30000000000001" r="0.8" fill="#d8d8d8"/>
<rect x="637.1" y="118.10000000000001" width="5.8" height="4.8" rx="0.6" fill="#e0e0e0"/>
<path d="M638.2 118.3 V116.5 A1.8 1.8 0 0 1 641.8 116.5 V118.3" fill="none" stroke="#e0e0e0" stroke-width="1.1"/>
<rect x="639.5" y="119.5" width="1" height="2" fill="#555"/>
<rect x="648.5" y="112.30000000000001" width="3.5" height="13" fill="#dd5a5a" />
<path d="M658.4 116.2 L661.1 118.60000000000001 L658.4 121.00000000000001" fill="none" stroke="#e8e8e8" stroke-width="1.5" stroke-linecap="round" stroke-linejoin="round"/>
<text x="688.4" y="121.80000000000001" font-size="8.3" fill="#f4f4f4" font-weight="bold" textLength="37.6" lengthAdjust="spacingAndGlyphs" >Overlay I...</text>
<circle cx="762.6" cy="118.80000000000001" r="2.6" fill="none" stroke="#cdcdcd" stroke-width="1.4"/>
<rect x="617" y="142.5" width="163.5" height="0.7" fill="#484848" opacity="0.8"/>
<path d="M619.0 134.20000000000002 Q623.8 129.60000000000002 628.5999999999999 134.20000000000002 Q623.8 138.8 619.0 134.20000000000002 Z" fill="#d8d8d8"/>
<circle cx="623.8" cy="134.20000000000002" r="1.9" fill="#4a4a4a"/><circle cx="623.8" cy="134.20000000000002" r="0.8" fill="#d8d8d8"/>
<rect x="637.1" y="134.00000000000003" width="5.8" height="4.8" rx="0.6" fill="#e0e0e0"/>
<path d="M638.2 134.20000000000002 V132.40000000000003 A1.8 1.8 0 0 1 641.8 132.40000000000003 V134.20000000000002" fill="none" stroke="#e0e0e0" stroke-width="1.1"/>
<rect x="639.5" y="135.40000000000003" width="1" height="2" fill="#555"/>
<rect x="648.5" y="128.20000000000002" width="3.5" height="13" fill="#5cd765" />
<path d="M658.4 132.1 L661.1 134.5 L658.4 136.9" fill="none" stroke="#e8e8e8" stroke-width="1.5" stroke-linecap="round" stroke-linejoin="round"/>
<text x="688.4" y="137.70000000000002" font-size="8.3" fill="#f4f4f4" font-weight="bold" textLength="37.6" lengthAdjust="spacingAndGlyphs" >Shadow I...</text>
<circle cx="762.6" cy="134.70000000000002" r="2.6" fill="none" stroke="#cdcdcd" stroke-width="1.4"/>
<rect x="617" y="158.39999999999998" width="163.5" height="0.7" fill="#484848" opacity="0.8"/>
<path d="M619.0 150.1 Q623.8 145.5 628.5999999999999 150.1 Q623.8 154.7 619.0 150.1 Z" fill="#d8d8d8"/>
<circle cx="623.8" cy="150.1" r="1.9" fill="#4a4a4a"/><circle cx="623.8" cy="150.1" r="0.8" fill="#d8d8d8"/>
<rect x="648.5" y="144.1" width="3.5" height="13" fill="#c75fd0" />
<path d="M658.4 149.3 L660.8 152.0 L663.1999999999999 149.3" fill="none" stroke="#e8e8e8" stroke-width="1.5" stroke-linecap="round" stroke-linejoin="round"/>
<text x="688.4" y="153.6" font-size="8.3" fill="#f4f4f4" font-weight="bold" textLength="37.9" lengthAdjust="spacingAndGlyphs" >Tshirt Color</text>
<circle cx="762.6" cy="150.6" r="2.6" fill="none" stroke="#cdcdcd" stroke-width="1.4"/>
<rect x="617" y="174.29999999999998" width="163.5" height="0.7" fill="#484848" opacity="0.8"/>
<path d="M619.0 166.0 Q623.8 161.4 628.5999999999999 166.0 Q623.8 170.6 619.0 166.0 Z" fill="#d8d8d8"/>
<circle cx="623.8" cy="166.0" r="1.9" fill="#4a4a4a"/><circle cx="623.8" cy="166.0" r="0.8" fill="#d8d8d8"/>
<rect x="648.5" y="159.6" width="3.5" height="14.6" fill="#c75fd0" />
<text x="706.2" y="169.5" font-size="8.3" fill="#f4f4f4" font-weight="bold" textLength="21" lengthAdjust="spacingAndGlyphs" >Desi...</text>
<circle cx="762.6" cy="166.5" r="2.6" fill="none" stroke="#cdcdcd" stroke-width="1.4"/>
<rect x="617" y="190.2" width="163.5" height="0.7" fill="#484848" opacity="0.8"/>
<path d="M619.0 181.9 Q623.8 177.3 628.5999999999999 181.9 Q623.8 186.5 619.0 181.9 Z" fill="#d8d8d8"/>
<circle cx="623.8" cy="181.9" r="1.9" fill="#4a4a4a"/><circle cx="623.8" cy="181.9" r="0.8" fill="#d8d8d8"/>
<rect x="648.5" y="175.5" width="3.5" height="14.6" fill="#c75fd0" />
<text x="706.2" y="185.4" font-size="8.3" fill="#f4f4f4" font-weight="bold" textLength="22" lengthAdjust="spacingAndGlyphs" >&lt;Pat...</text>
<circle cx="762.6" cy="182.4" r="4.3" fill="#8fa3bb" stroke="#b9c6d6" stroke-width="0.8"/>
<circle cx="762.6" cy="182.4" r="2.4" fill="#6e8299" stroke="#e0e6ee" stroke-width="1.1"/>
<rect x="617" y="206.1" width="163.5" height="0.7" fill="#484848" opacity="0.8"/>
<path d="M619.0 197.8 Q623.8 193.20000000000002 628.5999999999999 197.8 Q623.8 202.4 619.0 197.8 Z" fill="#d8d8d8"/>
<circle cx="623.8" cy="197.8" r="1.9" fill="#4a4a4a"/><circle cx="623.8" cy="197.8" r="0.8" fill="#d8d8d8"/>
<rect x="648.5" y="191.4" width="3.5" height="14.6" fill="#c75fd0" />
<text x="706.2" y="201.3" font-size="8.3" fill="#f4f4f4" font-weight="bold" textLength="21" lengthAdjust="spacingAndGlyphs" >&lt;Cli...</text>
<rect x="706.2" y="203.0" width="21" height="1" fill="#f0f0f0" />
<circle cx="762.6" cy="198.3" r="2.6" fill="none" stroke="#cdcdcd" stroke-width="1.4"/>
<rect x="617" y="222.0" width="163.5" height="0.7" fill="#484848" opacity="0.8"/>
<path d="M619.0 213.70000000000002 Q623.8 209.10000000000002 628.5999999999999 213.70000000000002 Q623.8 218.3 619.0 213.70000000000002 Z" fill="#d8d8d8"/>
<circle cx="623.8" cy="213.70000000000002" r="1.9" fill="#4a4a4a"/><circle cx="623.8" cy="213.70000000000002" r="0.8" fill="#d8d8d8"/>
<rect x="637.1" y="213.50000000000003" width="5.8" height="4.8" rx="0.6" fill="#e0e0e0"/>
<path d="M638.2 213.70000000000002 V211.90000000000003 A1.8 1.8 0 0 1 641.8 211.90000000000003 V213.70000000000002" fill="none" stroke="#e0e0e0" stroke-width="1.1"/>
<rect x="639.5" y="214.90000000000003" width="1" height="2" fill="#555"/>
<rect x="648.5" y="207.70000000000002" width="3.5" height="13" fill="#4ccfd0" />
<path d="M658.4 211.6 L661.1 214.0 L658.4 216.4" fill="none" stroke="#e8e8e8" stroke-width="1.5" stroke-linecap="round" stroke-linejoin="round"/>
<text x="688.4" y="217.20000000000002" font-size="8.3" fill="#f4f4f4" font-weight="bold" textLength="39" lengthAdjust="spacingAndGlyphs" >Background</text>
<circle cx="762.6" cy="214.20000000000002" r="2.6" fill="none" stroke="#cdcdcd" stroke-width="1.4"/>
<rect x="648.5" y="157" width="3.5" height="48.5" fill="#c75fd0" />
<rect x="671.8" y="112.2" width="12.6" height="12.8" fill="#f8f8f8" stroke="#2a2a2a" stroke-width="1"/>
<path d="M675 116 h6 v6 h-6 Z" fill="#ececec"/>
<rect x="671.8" y="128.3" width="12.6" height="12.8" fill="#f2f2f2" stroke="#2a2a2a" stroke-width="1"/>
<path transform="translate(673.4,130) scale(0.95)" d="M3 0.6 L4.2 0 Q5 0.9 5.8 0 L7 0.6 L10 2.6 L8.8 4.8 L7.6 4.2 L7.8 10.6 L2.2 10.6 L2.4 4.2 L1.2 4.8 L0 2.6 Z" fill="#d4d4d4"/>
<rect x="671.8" y="144.3" width="12.6" height="12.6" fill="#ffffff" stroke="#2a2a2a" stroke-width="1"/>
<path transform="translate(672.8,145.6) scale(1.05)" d="M3 0.6 L4.2 0 Q5 0.9 5.8 0 L7 0.6 L10 2.6 L8.8 4.8 L7.6 4.2 L7.8 10.6 L2.2 10.6 L2.4 4.2 L1.2 4.8 L0 2.6 Z" fill="#f5bf12"/>
<circle cx="678.1" cy="149" r="1.8" fill="#5a3a10"/>
<rect x="688.6" y="160" width="13.4" height="12.9" fill="#ffffff" stroke="#111" stroke-width="1"/>
<circle cx="695.3" cy="166.5" r="4.6" fill="#3a3a3a"/>
<path d="M689 160.4 h3 v2.2 l-3 2 Z M701.6 160.4 h-3 v2.2 l3 2 Z M689 172.5 h3 v-2.2 l-3 -2 Z M701.6 172.5 h-3 v-2.2 l3 -2 Z" fill="#111"/>
<path d="M693 165.2 h4.4 M693.4 167.6 h4" stroke="#e8d0d0" stroke-width="1"/>
<rect x="688.6" y="176" width="13.4" height="12.9" fill="#ffffff" stroke="#111" stroke-width="1"/>
<path transform="translate(689.9,177.2) scale(1.08)" d="M3 0.6 L4.2 0 Q5 0.9 5.8 0 L7 0.6 L10 2.6 L8.8 4.8 L7.6 4.2 L7.8 10.6 L2.2 10.6 L2.4 4.2 L1.2 4.8 L0 2.6 Z" fill="#f7c010"/>
<rect x="688.6" y="192" width="13.4" height="12.9" fill="#0e0e0e" stroke="#111" stroke-width="1"/>
<path transform="translate(689.9,193.2) scale(1.08)" d="M3 0.6 L4.2 0 Q5 0.9 5.8 0 L7 0.6 L10 2.6 L8.8 4.8 L7.6 4.2 L7.8 10.6 L2.2 10.6 L2.4 4.2 L1.2 4.8 L0 2.6 Z" fill="#ffffff"/>
<rect x="671.8" y="207.9" width="12.6" height="12.8" fill="#ffffff" stroke="#2a2a2a" stroke-width="1"/>
<rect x="770.6" y="148.5" width="4.4" height="4.6" fill="#c64fd0" stroke="#2a1a2e" stroke-width="1"/>
<path d="M777.6 142.4 H782.8 V147.6 Z" fill="#f4f4f4"/>
<rect x="770.2" y="179.2" width="6.6" height="6.6" fill="#d35fdc" stroke="#2a1a2e" stroke-width="1"/>
<rect x="612" y="516.6" width="173.5" height="1" fill="#454545" />
<text x="616.2" y="529" font-size="8.6" fill="#f2f2f2" font-weight="bold" textLength="28" lengthAdjust="spacingAndGlyphs" >4 Layers</text>
<path d="M663.6 521 H658.6 V531 H668.4 V526.4" fill="none" stroke="#dcdcdc" stroke-width="1.3"/>
<path d="M662.4 527.2 L668.6 520.8 M664.6 520.4 H669 V524.8" fill="none" stroke="#dcdcdc" stroke-width="1.3"/>
<circle cx="684.4" cy="523.6" r="3.3" fill="none" stroke="#e4e4e4" stroke-width="1.5"/><path d="M682 526.2 L678.4 530" stroke="#e4e4e4" stroke-width="1.8" stroke-linecap="round"/>
<rect x="697.4" y="521" width="6" height="7" fill="#666"/><rect x="700" y="523.6" width="3.6" height="4.6" fill="#5a5a5a"/>
<path d="M715 523 h4 M719 521 v8 M721 521.6 h6 v7 h-6 Z" stroke="#686868" stroke-width="1.2" fill="#626262"/>
<path d="M737.4 520.4 H746 V529.6 H740.6 L737.4 526.4 Z" fill="#e8e8e8"/><path d="M737.4 526.4 H740.6 V529.6" fill="#9a9a9a"/>
<path d="M756.6 522.4 H764.4 M759 522 V520.6 H762 V522" fill="none" stroke="#dcdcdc" stroke-width="1.2"/>
<path d="M757.4 523.6 H763.6 L763 531 H758 Z" fill="none" stroke="#dcdcdc" stroke-width="1.2"/><path d="M759.4 525 V529.6 M761.6 525 V529.6" stroke="#dcdcdc" stroke-width="0.9"/>
<rect x="609.5" y="531" width="179" height="3" fill="#3a3a3a" />
<path d="M668.8 348.8 H727.4 L748.6 370 V454.5 H668.8 Z" fill="#2b1407"/>
<path d="M727.4 348.8 L748.6 370 H727.4 Z" fill="#f8861c"/>
<rect x="643.7" y="353.1" width="78.3" height="26.7" fill="#fb8616" />
<text x="672.3" y="376" font-size="25.2" fill="#1c0e05" font-weight="bold" textLength="19.4" lengthAdjust="spacingAndGlyphs" stroke="#1c0e05" stroke-width="1.3">AI</text>
<text x="686.6" y="436.4" font-size="54" fill="#f78c38" font-weight="normal" textLength="43.4" lengthAdjust="spacingAndGlyphs" stroke="#f78c38" stroke-width="1.7" stroke-linejoin="round">Ai</text>
</g>
</svg>
</body></html>
